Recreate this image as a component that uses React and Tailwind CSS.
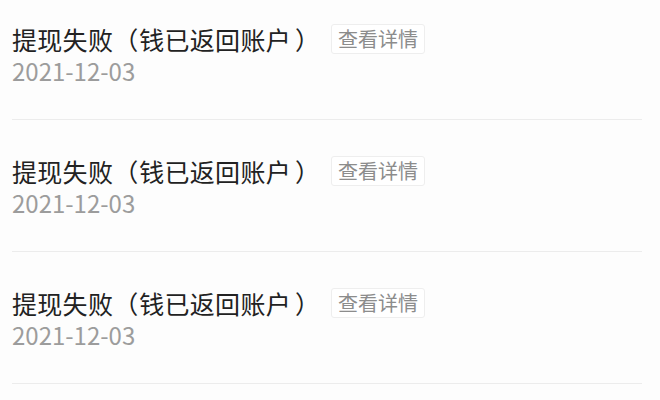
const records = [
  { id: 1, date: '2021-12-03' },
  { id: 2, date: '2021-12-03' },
  { id: 3, date: '2021-12-03' },
];

function Title() {
  return (
    <span className="flex items-center whitespace-nowrap text-[25px] leading-9 tracking-[0.3px] text-[#222]">
      <span>提现失败</span>
      <span className="inline-block w-[26px] overflow-visible">（</span>
      <span>钱已返回账户</span>
      <span className="inline-block w-[26px] overflow-visible pl-[4px]">）</span>
    </span>
  );
}

export default function App() {
  return (
    <div
      lang="zh-CN"
      className="min-h-[400px] w-[660px] overflow-hidden bg-[#fdfdfd]"
      style={{ fontFamily: '"Noto Sans CJK SC", "Noto Sans", sans-serif' }}
    >
      {records.map((item, index) => (
        <div
          key={item.id}
          className={`ml-3 mr-[18px] border-b border-[#ececec] pb-[34px] ${index === 0 ? 'pt-[21px]' : 'pt-[33px]'}`}
        >
          <div className="flex h-9 items-center">
            <Title />
            <button
              type="button"
              className="ml-[14px] h-[30px] rounded-[3px] border border-[#eeeeee] bg-white px-[6px] text-[20px] leading-7 text-[#8c8c8c]"
            >
              查看详情
            </button>
          </div>
          <div className="text-[24px] leading-7 text-[#9c9c9c]">{item.date}</div>
        </div>
      ))}
    </div>
  );
}
